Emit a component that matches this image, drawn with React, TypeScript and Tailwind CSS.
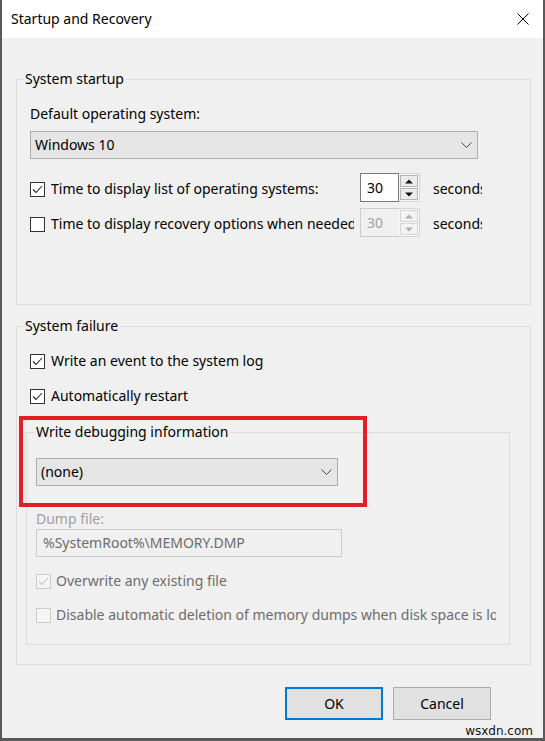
import React from "react";

function Check({ checked, disabled, className = "" }: { checked?: boolean; disabled?: boolean; className?: string }) {
  const box = disabled
    ? "w-[15px] h-[15px] shrink-0 border border-[#cccccc] bg-[#f5f5f5] flex items-center justify-center"
    : "w-[15px] h-[15px] shrink-0 border border-[#333333] bg-white flex items-center justify-center";
  return (
    <span className={`${box} ${className}`}>
      {checked && (
        <svg width="13" height="13" viewBox="0 0 13 13">
          <polyline
            points="2,6.5 5,9.5 11,3"
            fill="none"
            stroke={disabled ? "#c4c4c4" : "#222222"}
            strokeWidth="1.1"
          />
        </svg>
      )}
    </span>
  );
}

function Chevron() {
  return (
    <svg width="11" height="6" viewBox="0 0 11 6">
      <polyline points="0.5,0.5 5.5,5.5 10.5,0.5" fill="none" stroke="#444444" strokeWidth="1" />
    </svg>
  );
}

function Combo({ label, className = "" }: { label: string; className?: string }) {
  return (
    <div
      className={`h-[28px] flex items-center justify-between border border-[#adadad] bg-[#e5e5e5] pl-[4px] pr-[5px] ${className}`}
    >
      <span className="leading-[20px] whitespace-nowrap">{label}</span>
      <Chevron />
    </div>
  );
}

function Arrow({ up, color }: { up?: boolean; color: string }) {
  return (
    <svg width="8" height="5" viewBox="0 0 8 5">
      <polygon points={up ? "0,4.5 4,0.5 8,4.5" : "0,0.5 4,4.5 8,0.5"} fill={color} />
    </svg>
  );
}

function Spinner({ disabled, className = "" }: { disabled?: boolean; className?: string }) {
  const field = disabled
    ? "w-[39px] h-full border border-r-0 border-[#cccccc] bg-[#f0f0f0] text-[#a0a0a0] pl-[6px] leading-[27px]"
    : "w-[39px] h-full border border-[#7a7a7a] bg-white pl-[6px] leading-[27px]";
  const btn = disabled
    ? "flex-1 border border-[#d6d6d6] bg-[#f3f3f3] flex items-center justify-center"
    : "flex-1 border border-[#b4b4b4] bg-[#ececec] flex items-center justify-center";
  const arrow = disabled ? "#b0b0b0" : "#111111";
  return (
    <div className={`flex h-[29px] shrink-0 ${className}`}>
      <div className={field}>30</div>
      <div className="w-[21px] h-full flex flex-col gap-[1px] p-[1px] border-y border-r border-[#d4d4d4] bg-[#f7f7f7]">
        <div className={btn}>
          <Arrow up color={arrow} />
        </div>
        <div className={btn}>
          <Arrow color={arrow} />
        </div>
      </div>
    </div>
  );
}

export default function App() {
  return (
    <div className="w-[545px] h-[741px] relative flex flex-col bg-[#f0f0f0] border-l-2 border-r-2 border-b-[3px] border-[#5a5a5a] font-['Noto_Sans',sans-serif] text-[14px] text-black overflow-hidden">
      {/* title bar */}
      <div className="h-[38px] shrink-0 bg-white flex items-center justify-between pl-[9px] pr-[14px]">
        <span className="leading-[20px]">Startup and Recovery</span>
        <svg width="12" height="12" viewBox="0 0 12 12">
          <line x1="0.5" y1="0.5" x2="11.5" y2="11.5" stroke="#000" strokeWidth="1" />
          <line x1="11.5" y1="0.5" x2="0.5" y2="11.5" stroke="#000" strokeWidth="1" />
        </svg>
      </div>

      {/* System startup */}
      <fieldset className="mt-[31px] ml-[14px] mr-[12px] border border-[#dcdcdc] pl-[6px] pb-[67px]">
        <legend className="px-[2px] leading-[20px]">System startup</legend>
        <div className="pl-[7px] flex flex-col">
          <div className="mt-[15px] leading-[20px]">Default operating system:</div>
          <Combo label="Windows 10" className="mt-[7px] w-[448px]" />
          <div className="mt-[14px] flex h-[29px]">
            <Check checked className="mt-[9px]" />
            <span className="ml-[6px] mt-[6px] w-[306px] overflow-hidden whitespace-nowrap leading-[20px]">
              Time to display list of operating systems:
            </span>
            <Spinner className="ml-[3px]" />
            <span className="ml-[13px] mt-[6px] w-[49px] overflow-hidden whitespace-nowrap leading-[20px]">
              seconds
            </span>
          </div>
          <div className="mt-[6px] flex h-[29px]">
            <Check className="mt-[9px]" />
            <span className="ml-[6px] mt-[6px] w-[303px] overflow-hidden whitespace-nowrap leading-[20px]">
              Time to display recovery options when needed:
            </span>
            <Spinner disabled className="ml-[6px]" />
            <span className="ml-[13px] mt-[6px] w-[49px] overflow-hidden whitespace-nowrap leading-[20px]">
              seconds
            </span>
          </div>
        </div>
      </fieldset>

      {/* System failure */}
      <fieldset className="mt-[11px] ml-[14px] mr-[12px] border border-[#dcdcdc] pl-[6px] pb-[19px]">
        <legend className="px-[2px] leading-[20px]">System failure</legend>
        <div className="flex flex-col">
          <div className="mt-[15px] pl-[7px] h-[20px] flex items-center">
            <Check checked />
            <span className="ml-[6px] leading-[20px]">Write an event to the system log</span>
          </div>
          <div className="mt-[15px] pl-[7px] h-[20px] flex items-center">
            <Check checked />
            <span className="ml-[6px] leading-[20px]">Automatically restart</span>
          </div>

          <fieldset className="mt-[16px] ml-[3px] w-[484px] border border-[#dcdcdc] pl-[7px] pb-[19px]">
            <legend className="px-[2px] leading-[20px]">Write debugging information</legend>
            <div className="pl-[2px] flex flex-col">
              <Combo label="(none)" className="mt-[16px] w-[302px]" />
              <div className="mt-[23px] leading-[20px] text-[#a0a0a0]">Dump file:</div>
              <div className="h-[28px] w-[306px] border border-[#cccccc] bg-[#f0f0f0] pl-[6px] leading-[26px] text-[#6d6d6d] whitespace-nowrap">
                {"%SystemRoot%\\MEMORY.DMP"}
              </div>
              <div className="mt-[14px] h-[20px] flex items-center">
                <Check checked disabled />
                <span className="ml-[5px] leading-[20px] text-[#6d6d6d]">Overwrite any existing file</span>
              </div>
              <div className="mt-[14px] h-[20px] flex items-center">
                <Check disabled />
                <span className="ml-[5px] w-[440px] overflow-hidden whitespace-nowrap leading-[20px] text-[#6d6d6d]">
                  Disable automatic deletion of memory dumps when disk space is low
                </span>
              </div>
            </div>
          </fieldset>
        </div>
      </fieldset>

      {/* dialog buttons */}
      <div className="mt-[22px] flex justify-end gap-[10px] pr-[52px]">
        <button className="w-[98px] h-[33px] border-2 border-[#0078d7] bg-[#e1e1e1] leading-[20px]">OK</button>
        <button className="w-[98px] h-[33px] border border-[#adadad] bg-[#e1e1e1] leading-[20px]">Cancel</button>
      </div>

      {/* highlight frame around the debugging section */}
      <div className="absolute left-[17px] top-[416px] w-[348px] h-[91px] border-4 border-[#e31e25]" />

      <div className="absolute right-[10px] top-[723px] leading-[16px] text-[12px] font-['DejaVu_Sans',sans-serif] text-[#111111]">
        wsxdn.com
      </div>
    </div>
  );
}
